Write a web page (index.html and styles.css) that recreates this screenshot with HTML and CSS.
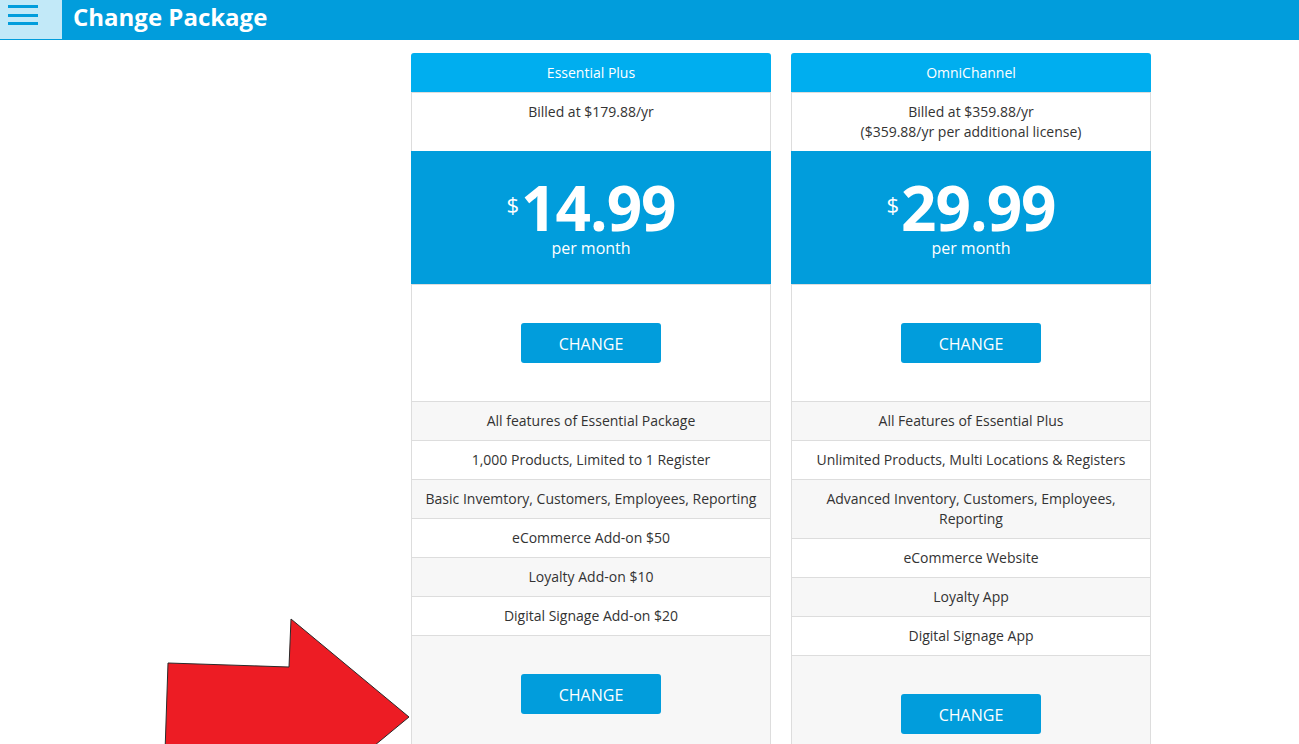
FILE: index.html
```html
<!DOCTYPE html>
<html lang="en">
<head>
<meta charset="utf-8">
<title>Change Package</title>
<link rel="stylesheet" href="styles.css">
</head>
<body>
<header class="topbar">
  <button class="menu-btn" aria-label="Menu"><span></span><span></span><span></span></button>
  <h1 class="title">Change Package</h1>
</header>
<main class="plans">
  <section class="plan">
    <div class="plan-head">Essential Plus</div>
    <div class="plan-billing">Billed at $179.88/yr</div>
    <div class="plan-price">
      <div class="amount"><span class="currency">$</span><span class="value">14.99</span></div>
      <div class="period">per month</div>
    </div>
    <div class="plan-action"><button class="btn">CHANGE</button></div>
    <ul class="features">
      <li>All features of Essential Package</li>
      <li>1,000 Products, Limited to 1 Register</li>
      <li>Basic Invemtory, Customers, Employees, Reporting</li>
      <li>eCommerce Add-on $50</li>
      <li>Loyalty Add-on $10</li>
      <li>Digital Signage Add-on $20</li>
    </ul>
    <div class="plan-action plan-action-alt"><button class="btn">CHANGE</button></div>
  </section>
  <section class="plan">
    <div class="plan-head">OmniChannel</div>
    <div class="plan-billing">Billed at $359.88/yr<br>($359.88/yr per additional license)</div>
    <div class="plan-price">
      <div class="amount"><span class="currency">$</span><span class="value">29.99</span></div>
      <div class="period">per month</div>
    </div>
    <div class="plan-action"><button class="btn">CHANGE</button></div>
    <ul class="features">
      <li>All Features of Essential Plus</li>
      <li>Unlimited Products, Multi Locations &amp; Registers</li>
      <li>Advanced Inventory, Customers, Employees, Reporting</li>
      <li>eCommerce Website</li>
      <li>Loyalty App</li>
      <li>Digital Signage App</li>
    </ul>
    <div class="plan-action plan-action-alt"><button class="btn">CHANGE</button></div>
  </section>
</main>
<svg class="arrow" width="260" height="200" viewBox="0 0 260 200" aria-hidden="true">
  <polygon points="8,51 129,55 131,7 249,105 140,195 140,170 4,170" fill="#ed1c24" stroke="#2a2a2a" stroke-width="1"/>
</svg>
</body>
</html>
```
FILE: styles.css
```css
* { box-sizing: border-box; }
html, body { margin: 0; padding: 0; }
body {
  font-family: "Open Sans", "Liberation Sans", sans-serif;
  color: #333;
  background: #fff;
  position: relative;
}
.topbar {
  display: flex;
  align-items: flex-start;
  height: 40px;
  background: #019ddc;
}
.menu-btn {
  width: 62px;
  height: 39px;
  border: 0;
  margin: 0;
  background: #c2e9f8;
  display: flex;
  flex-direction: column;
  padding: 5px 0 0 8px;
  gap: 5.5px;
}
.menu-btn span {
  display: block;
  width: 30px;
  height: 3px;
  background: #019ddc;
}
.title {
  margin: 0;
  padding-left: 11px;
  font-size: 24px;
  line-height: 33px;
  font-weight: 700;
  color: #fff;
}
.plans {
  display: flex;
  gap: 20px;
  padding: 13px 0 0 411px;
  align-items: flex-start;
}
.plan {
  width: 360px;
  text-align: center;
  font-size: 14px;
}
.plan-head {
  height: 39px;
  line-height: 39px;
  background: #00aeef;
  color: #fff;
  border-radius: 3px 3px 0 0;
}
.plan-billing,
.plan-action,
.features li {
  border-left: 1px solid #ddd;
  border-right: 1px solid #ddd;
  border-top: 1px solid #ddd;
}
.plan-billing {
  height: 59px;
  padding-top: 9px;
  line-height: 20px;
}
.plan-price {
  height: 133px;
  background: #019ddc;
  color: #fff;
  padding-top: 26px;
}
.amount {
  line-height: 61px;
  height: 61px;
}
.currency {
  font-size: 22px;
  line-height: 1;
  vertical-align: 18px;
  margin-right: 2px;
}
.value {
  font-size: 62px;
  font-weight: 700;
  letter-spacing: -1px;
}
.period {
  font-size: 16px;
  line-height: 20px;
}
.plan-action {
  padding: 38px 0;
  background: #fff;
}
.plan-action-alt {
  background: #f7f7f7;
}
.btn {
  width: 140px;
  height: 40px;
  border: 0;
  border-radius: 3px;
  background: #019ddc;
  color: #fff;
  font-family: "Open Sans", "Liberation Sans", sans-serif;
  font-size: 16px;
  padding: 2px 0 0;
}
.features {
  list-style: none;
  margin: 0;
  padding: 0;
}
.features li {
  padding: 9px 8px;
  line-height: 20px;
  background: #fff;
}
.features li:nth-child(odd) {
  background: #f7f7f7;
}
.arrow {
  position: absolute;
  left: 160px;
  top: 612px;
  overflow: visible;
}
```
